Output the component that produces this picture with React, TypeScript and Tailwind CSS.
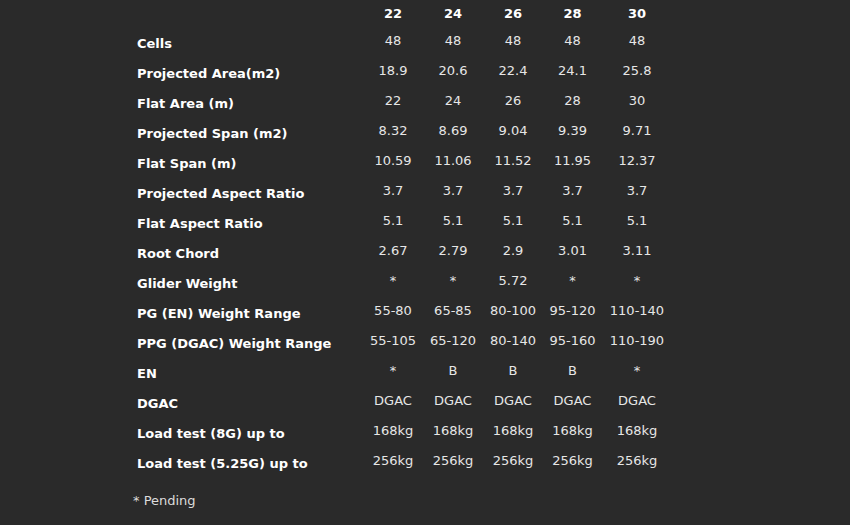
const sizes = ["22", "24", "26", "28", "30"];

const rows: [string, string[]][] = [
  ["Cells", ["48", "48", "48", "48", "48"]],
  ["Projected Area(m2)", ["18.9", "20.6", "22.4", "24.1", "25.8"]],
  ["Flat Area (m)", ["22", "24", "26", "28", "30"]],
  ["Projected Span (m2)", ["8.32", "8.69", "9.04", "9.39", "9.71"]],
  ["Flat Span (m)", ["10.59", "11.06", "11.52", "11.95", "12.37"]],
  ["Projected Aspect Ratio", ["3.7", "3.7", "3.7", "3.7", "3.7"]],
  ["Flat Aspect Ratio", ["5.1", "5.1", "5.1", "5.1", "5.1"]],
  ["Root Chord", ["2.67", "2.79", "2.9", "3.01", "3.11"]],
  ["Glider Weight", ["*", "*", "5.72", "*", "*"]],
  ["PG (EN) Weight Range", ["55-80", "65-85", "80-100", "95-120", "110-140"]],
  ["PPG (DGAC) Weight Range", ["55-105", "65-120", "80-140", "95-160", "110-190"]],
  ["EN", ["*", "B", "B", "B", "*"]],
  ["DGAC", ["DGAC", "DGAC", "DGAC", "DGAC", "DGAC"]],
  ["Load test (8G) up to", ["168kg", "168kg", "168kg", "168kg", "168kg"]],
  ["Load test (5.25G) up to", ["256kg", "256kg", "256kg", "256kg", "256kg"]],
];

const colWidths = ["w-[60px]", "w-[60px]", "w-[60px]", "w-[59px]", "w-[70px]"];

export default function App() {
  return (
    <div className="w-[850px] h-[525px] bg-[#2a2a2a] overflow-hidden font-['DejaVu_Sans',Verdana,sans-serif] text-[13px]">
      <div className="pl-[137px]">
        <div className="flex h-[27px] items-center font-bold text-white">
          <div className="w-[226px]" />
          {sizes.map((s, i) => (
            <div key={s} className={`${colWidths[i]} text-center`}>
              {s}
            </div>
          ))}
        </div>
        {rows.map(([label, values]) => (
          <div key={label} className="flex h-[30px] items-center">
            <div className="w-[226px] pt-[3px] font-bold text-white whitespace-nowrap">{label}</div>
            {values.map((v, i) => (
              <div key={i} className={`${colWidths[i]} pb-[3px] text-center text-[#e6e6e6] whitespace-nowrap`}>
                {v}
              </div>
            ))}
          </div>
        ))}
      </div>
      <div className="pl-[133px] mt-[14px] leading-[20px] text-[#dcdcdc]">* Pending</div>
    </div>
  );
}
